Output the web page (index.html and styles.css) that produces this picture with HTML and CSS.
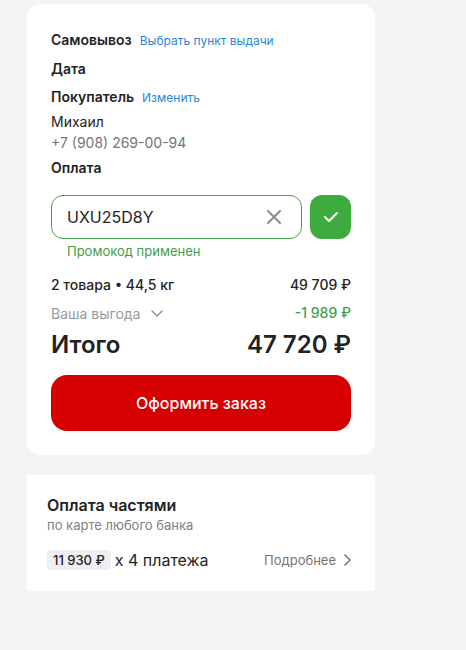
FILE: index.html
```html
<!DOCTYPE html>
<html lang="ru">
<head>
    <meta charset="UTF-8">
    <meta name="viewport" content="width=device-width, initial-scale=1.0">
    <title>Оформление заказа</title>
    <link rel="stylesheet" href="styles.css">
</head>
<body>
    <main class="checkout">
        <!-- Заказ -->
        <section class="card order">
            <div class="order-row">
                <h2>Самовывоз</h2>
                <a href="#">Выбрать пункт выдачи</a>
            </div>
            <div class="order-row">
                <h2>Дата</h2>
            </div>
            <div class="order-row">
                <h2>Покупатель</h2>
                <a href="#">Изменить</a>
            </div>
            <div class="buyer">
                <p class="buyer-name">Михаил</p>
                <p class="buyer-phone">+7 (908) 269-00-94</p>
            </div>
            <div class="order-row">
                <h2>Оплата</h2>
            </div>

            <!-- Промокод -->
            <form class="promo">
                <div class="promo-field">
                    <input type="text" id="promo" value="UXU25D8Y" aria-label="Промокод" aria-describedby="promo-hint">
                    <button type="button" class="promo-clear" aria-label="Очистить">
                        <svg width="14" height="14" viewBox="0 0 14 14" fill="none" stroke="#8c8c8c" stroke-width="2" stroke-linecap="round">
                            <path d="M1 1l12 12M13 1L1 13"/>
                        </svg>
                    </button>
                </div>
                <button type="submit" class="promo-apply" aria-label="Применить">
                    <svg width="14" height="10" viewBox="0 0 14 10" fill="none" stroke="#fff" stroke-width="2" stroke-linecap="round" stroke-linejoin="round">
                        <path d="M1 5l4 4 8-8"/>
                    </svg>
                </button>
            </form>
            <p class="promo-hint" id="promo-hint">Промокод применен</p>

            <!-- Сумма -->
            <div class="sum-row">
                <span>2 товара • 44,5 кг</span>
                <span>49 709 ₽</span>
            </div>
            <div class="sum-row">
                <button type="button" class="benefit">
                    Ваша выгода
                    <svg width="12" height="7" viewBox="0 0 12 7" fill="none" stroke="#8c8c8c" stroke-width="1.4" stroke-linecap="round" stroke-linejoin="round">
                        <path d="M1 1l5 5 5-5"/>
                    </svg>
                </button>
                <span class="discount">-1 989 ₽</span>
            </div>
            <div class="sum-row total">
                <span>Итого</span>
                <span>47 720 ₽</span>
            </div>
            <button type="button" class="submit-btn">Оформить заказ</button>
        </section>

        <!-- Оплата частями -->
        <section class="card parts">
            <h3>Оплата частями</h3>
            <p class="parts-note">по карте любого банка</p>
            <div class="parts-row">
                <span class="parts-price">11 930 ₽</span>
                <span class="parts-count">x 4 платежа</span>
                <a class="parts-more" href="#">
                    Подробнее
                    <svg width="7" height="12" viewBox="0 0 7 12" fill="none" stroke="#757575" stroke-width="1.6" stroke-linecap="round" stroke-linejoin="round">
                        <path d="M1 1l5 5-5 5"/>
                    </svg>
                </a>
            </div>
        </section>
    </main>
</body>
</html>
```

FILE: styles.css
```css
* {
    margin: 0;
    padding: 0;
    box-sizing: border-box;
}

body {
    font-family: Inter, "Noto Sans", sans-serif;
    font-size: 14px;
    background-color: #f3f4f6;
    color: #1f2326;
}

a {
    color: #2a87d8;
    text-decoration: none;
}

button,
input {
    font-family: inherit;
    color: inherit;
    border: none;
    background: none;
}

button {
    cursor: pointer;
}

svg {
    display: block;
    flex-shrink: 0;
}

.checkout {
    display: flex;
    flex-direction: column;
    gap: 20px;
    padding: 4px 91px 20px 27px;
}

.card {
    background-color: #fff;
}

/* Заказ */
.order {
    padding: 23px 24px 24px;
    border-radius: 14px;
}

.order-row {
    display: flex;
    align-items: baseline;
    gap: 8px;
    margin-bottom: 2px;
    line-height: 26px;
}

.order-row h2 {
    font-size: 14px;
    font-weight: 600;
}

.order-row a {
    font-size: 12px;
}

.buyer {
    margin: -2px 0 2px;
    line-height: 21px;
}

.buyer-phone {
    color: #757575;
}

/* Промокод */
.promo {
    display: flex;
    gap: 8px;
    margin-top: 14px;
}

.promo-field {
    display: flex;
    align-items: center;
    flex: 1;
    min-width: 0;
    height: 44px;
    padding: 0 14px 0 15px;
    border: 1px solid #43a047;
    border-radius: 12px;
}

.promo-field input {
    flex: 1;
    min-width: 0;
    font-size: 16px;
    outline: none;
}

.promo-clear {
    padding: 6px;
}

.promo-apply {
    display: flex;
    align-items: center;
    justify-content: center;
    flex-shrink: 0;
    width: 41px;
    height: 44px;
    border-radius: 12px;
    background-color: #3eab3e;
}

.promo-hint {
    margin: 2px 0 10px 16px;
    font-size: 13px;
    line-height: 20px;
    color: #43a047;
}

/* Сумма */
.sum-row {
    display: flex;
    justify-content: space-between;
    align-items: center;
    font-weight: 500;
    line-height: 28px;
}

.benefit {
    display: flex;
    align-items: center;
    gap: 11px;
    font-size: 14px;
    color: #999;
}

.discount {
    color: #43a047;
}

.total {
    font-size: 24px;
    font-weight: 600;
    line-height: 36px;
}

.submit-btn {
    width: 100%;
    height: 56px;
    margin-top: 12px;
    border-radius: 16px;
    background-color: #d60000;
    color: #fff;
    font-size: 16px;
    font-weight: 500;
}

/* Оплата частями */
.parts {
    padding: 20px;
}

.parts h3 {
    font-size: 16px;
    font-weight: 600;
    line-height: 20px;
}

.parts-note {
    font-size: 13px;
    line-height: 20px;
    color: #808080;
}

.parts-row {
    display: flex;
    align-items: center;
    gap: 4px;
    margin-top: 14px;
    line-height: 22px;
}

.parts-price {
    padding: 0 6px;
    border-radius: 4px;
    background-color: #eeeff1;
    font-size: 13px;
    font-weight: 500;
    line-height: 20px;
}

.parts-count {
    font-size: 16px;
}

.parts-more {
    display: flex;
    align-items: center;
    gap: 8px;
    margin-left: auto;
    padding-right: 4px;
    font-size: 13px;
    color: #757575;
}
```
